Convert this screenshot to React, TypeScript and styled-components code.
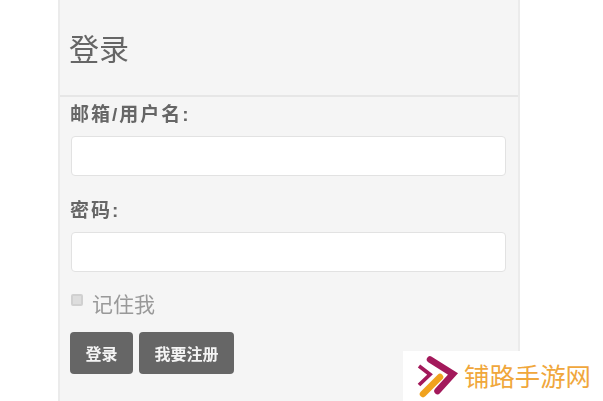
import React from 'react';
import styled, { createGlobalStyle } from 'styled-components';

const GlobalStyle = createGlobalStyle`
	html, body {
		margin: 0;
		padding: 0;
		background: #fff;
	}

	* {
		box-sizing: border-box;
	}
`;

const Page = styled.div`
	position: relative;
	width: 603px;
	height: 401px;
	overflow: hidden;
	background: #fff;
	font-family: 'Liberation Sans', 'Noto Sans CJK SC', sans-serif;
`;

const Panel = styled.div`
	width: 462px;
	height: 401px;
	margin-left: 58px;
	background: #f5f5f5;
	border-left: 2px solid #ebebeb;
	border-right: 2px solid #ebebeb;
	filter: blur(0.7px);
`;

const PanelHeader = styled.div`
	display: flex;
	align-items: center;
	height: 97px;
	padding: 4px 0 0 9px;
	border-bottom: 2px solid #e6e6e6;
`;

const Title = styled.h1`
	margin: 0;
	font-size: 30px;
	font-weight: 400;
	line-height: 36px;
	color: #666;
`;

const Form = styled.form`
	display: flex;
	flex-direction: column;
	padding: 5px 12px 0 10px;
`;

const Label = styled.label`
	display: block;
	height: 34px;
	font-size: 19px;
	font-weight: 700;
	line-height: 26px;
	letter-spacing: 2px;
	color: #666;
`;

const TextInput = styled.input`
	display: block;
	width: 435px;
	height: 40px;
	margin: 0 0 22px 1px;
	background: #fff;
	border: 1px solid #e2e2e2;
	border-radius: 4px;
	outline: none;
`;

const RememberRow = styled.div`
	display: flex;
	align-items: center;
	gap: 9px;
	height: 28px;
	margin: -5px 0 15px 1px;
	font-size: 21px;
	color: #999;
`;

const CheckBox = styled.span`
	width: 12px;
	height: 12px;
	margin-top: -6px;
	background: #ddd;
	border: 2px solid #d0d0d0;
	border-radius: 2px;
`;

const ButtonRow = styled.div`
	display: flex;
	gap: 6px;
`;

const Button = styled.button<{ $width: number }>`
	width: ${({ $width }) => $width}px;
	height: 42px;
	padding: 0;
	font-family: inherit;
	font-size: 16px;
	font-weight: 700;
	color: #f4f4f4;
	background: #666;
	border: none;
	border-radius: 4px;
`;

const Watermark = styled.div`
	position: absolute;
	right: 0;
	bottom: 0;
	display: flex;
	align-items: center;
	gap: 5px;
	width: 200px;
	height: 50px;
	padding: 2px 0 0 14px;
	background: #fff;
`;

const WatermarkText = styled.span`
	font-size: 25.4px;
	line-height: 30px;
	color: #f0a73c;
	white-space: nowrap;
`;

function LogoIcon(): JSX.Element {
	return (
		<svg width="42" height="42" viewBox="0 0 42 42" fill="none">
			<path d="M13 3.5 L36 18 L20.5 35" stroke="#a3195b" strokeWidth="6.5" strokeLinecap="round" />
			<path d="M2 10 L13 18.5 L2 29" stroke="#a3195b" strokeWidth="3.8" />
			<path d="M23 21 L6 38" stroke="#f0a21e" strokeWidth="6.5" strokeLinecap="round" />
		</svg>
	);
}

function App(): JSX.Element {
	return (
		<Page>
			<GlobalStyle />
			<Panel>
				<PanelHeader>
					<Title>登录</Title>
				</PanelHeader>
				<Form>
					<Label>邮箱/用户名:</Label>
					<TextInput type="text" />
					<Label>密码:</Label>
					<TextInput type="password" />
					<RememberRow>
						<CheckBox />
						<span>记住我</span>
					</RememberRow>
					<ButtonRow>
						<Button type="button" $width={63}>登录</Button>
						<Button type="button" $width={95}>我要注册</Button>
					</ButtonRow>
				</Form>
			</Panel>
			<Watermark>
				<LogoIcon />
				<WatermarkText>铺路手游网</WatermarkText>
			</Watermark>
		</Page>
	);
}

export default App;
